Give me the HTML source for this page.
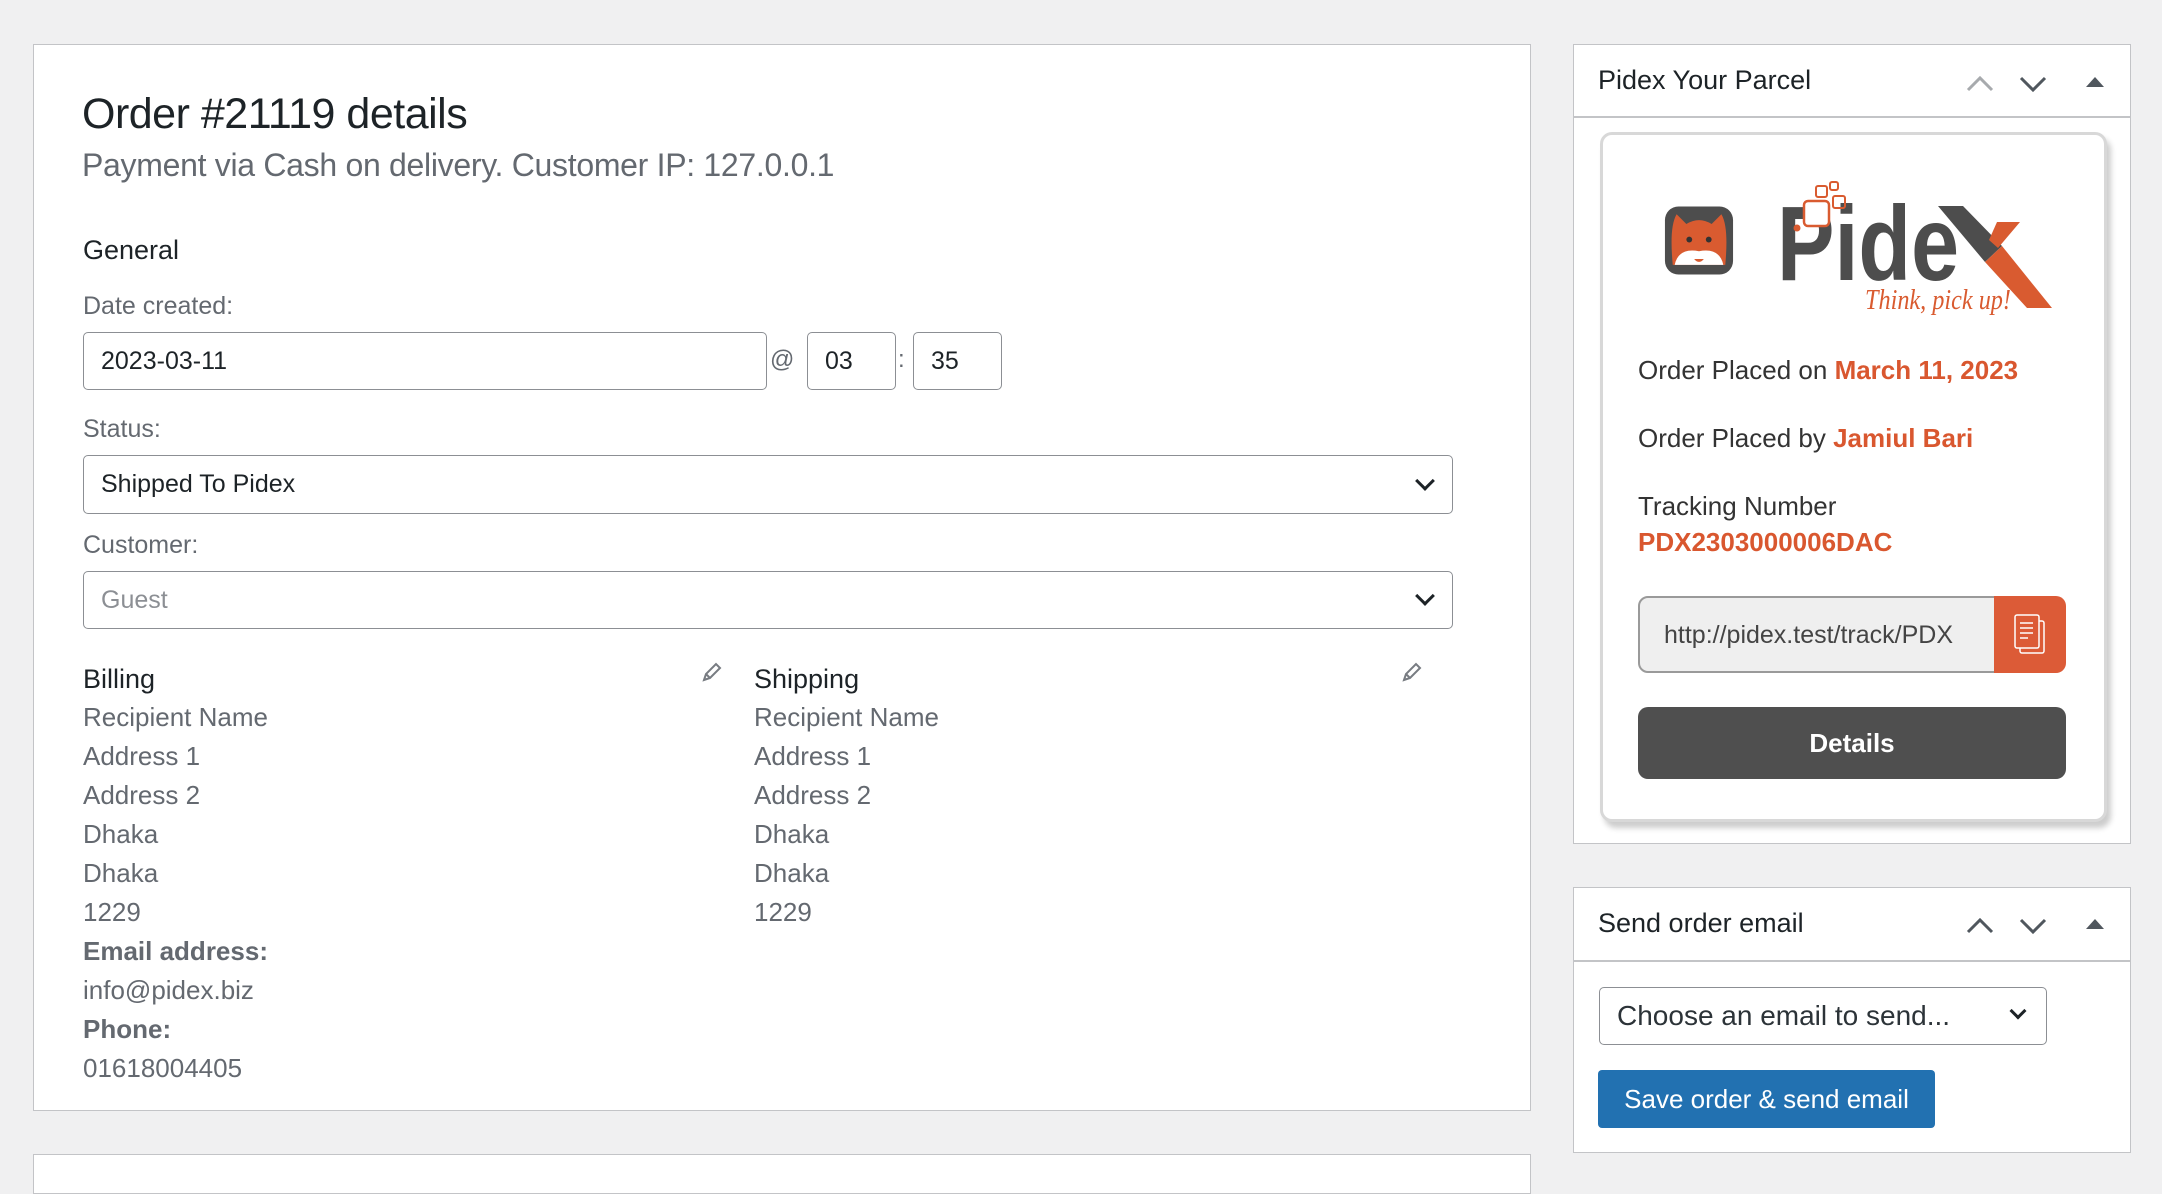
<!DOCTYPE html>
<html><head><meta charset="utf-8"><style>
*{box-sizing:border-box;margin:0;padding:0}
body{width:2162px;height:1178px;background:#f0f0f1;font-family:"Liberation Sans",sans-serif;color:#1d2327;position:relative;overflow:hidden}
.abs{position:absolute}
.panel{position:absolute;background:#fff;border:1.5px solid #c3c4c7}
.lbl{position:absolute;left:83px;font-size:25px;color:#646970}
.inp{position:absolute;border:1.5px solid #8c8f94;border-radius:5px;background:#fff;font-size:25px;padding-left:17px;display:flex;align-items:center}
.addr{position:absolute;font-size:26px;color:#646970;line-height:39px}
.chev{position:absolute;width:14px;height:14px;border-right:3px solid #1d2327;border-bottom:3px solid #1d2327;transform:rotate(45deg)}
.nun{font-family:"Liberation Sans",sans-serif}
</style></head><body>

<div class="panel" style="left:33px;top:44px;width:1498px;height:1067px"></div>
<div class="panel" style="left:33px;top:1154px;width:1498px;height:40px"></div>

<div class="abs" style="left:82px;top:90px;font-size:43px;letter-spacing:-0.5px">Order #21119 details</div>
<div class="abs" style="left:82px;top:147px;font-size:32px;color:#646970;letter-spacing:-0.3px">Payment via Cash on delivery. Customer IP: 127.0.0.1</div>
<div class="abs" style="left:83px;top:235px;font-size:27px">General</div>
<div class="lbl" style="top:292px">Date created:</div>
<div class="inp" style="left:83px;top:332px;width:684px;height:58px">2023-03-11</div>
<div class="abs" style="left:770px;top:346px;font-size:24px;color:#646970">@</div>
<div class="inp" style="left:807px;top:332px;width:89px;height:58px">03</div>
<div class="abs" style="left:898px;top:346px;font-size:24px;color:#646970">:</div>
<div class="inp" style="left:913px;top:332px;width:89px;height:58px">35</div>

<div class="lbl" style="top:415px">Status:</div>
<div class="inp" style="left:83px;top:455px;width:1370px;height:59px">Shipped To Pidex</div>
<div class="chev" style="left:1418px;top:474px"></div>
<div class="lbl" style="top:531px">Customer:</div>
<div class="inp" style="left:83px;top:571px;width:1370px;height:58px;color:#8c8f94">Guest</div>
<div class="chev" style="left:1418px;top:589px"></div>

<div class="abs" style="left:83px;top:664px;font-size:27px">Billing</div>
<div class="abs" style="left:754px;top:664px;font-size:27px">Shipping</div>
<svg class="abs" style="left:700px;top:660px" width="24" height="24" viewBox="0 0 24 24"><path d="M4 20l2-6 10-10 4 4-10 10z M6 14l4 4" fill="none" stroke="#787c82" stroke-width="2"/></svg>
<svg class="abs" style="left:1400px;top:660px" width="24" height="24" viewBox="0 0 24 24"><path d="M4 20l2-6 10-10 4 4-10 10z M6 14l4 4" fill="none" stroke="#787c82" stroke-width="2"/></svg>
<div class="addr" style="left:83px;top:698px">Recipient Name<br>Address 1<br>Address 2<br>Dhaka<br>Dhaka<br>1229<br><b>Email address:</b><br>info@pidex.biz<br><b>Phone:</b><br>01618004405</div>
<div class="addr" style="left:754px;top:698px">Recipient Name<br>Address 1<br>Address 2<br>Dhaka<br>Dhaka<br>1229</div>

<!-- right panel -->
<div class="panel" style="left:1573px;top:44px;width:558px;height:800px"></div>
<div class="abs" style="left:1574px;top:116px;width:556px;height:1.5px;background:#c3c4c7"></div>
<div class="abs" style="left:1598px;top:65px;font-size:27px">Pidex Your Parcel</div>
<svg class="abs" style="left:1964px;top:70px" width="160" height="26" viewBox="0 0 160 26"><path d="M4 20l12-12 12 12" fill="none" stroke="#a7aaad" stroke-width="3"/><path d="M57 8l12 12 12-12" fill="none" stroke="#50575e" stroke-width="3"/><path d="M122 17l9-10 9 10z" fill="#50575e"/></svg>

<div class="abs" style="left:1600px;top:132px;width:507px;height:690px;background:#fff;border:3px solid #d8d8d8;border-radius:12px;box-shadow:4px 6px 6px rgba(0,0,0,.2)"></div>
<!-- fox -->
<svg class="abs" style="left:1663px;top:203px" width="72" height="75" viewBox="0 0 74 74"><rect x="2" y="2" width="70" height="70" rx="14" fill="#4d4d4d"/><path d="M10 62 C8 40 8 20 14 10 L24 20 Q37 12 50 20 L60 10 C66 20 66 40 64 62Z" fill="#d95b30"/><path d="M12 62 Q16 44 37 48 Q58 44 62 62Z" fill="#fff"/><circle cx="27" cy="36" r="3" fill="#333"/><circle cx="47" cy="36" r="3" fill="#333"/><path d="M32 56 Q37 62 42 56" fill="#d95b30"/></svg>
<!-- Pidex wordmark -->
<svg class="abs" style="left:1770px;top:166px" width="300" height="160" viewBox="0 0 300 160">
<text x="7" y="114" font-family="Liberation Sans" font-weight="bold" font-size="106" fill="#4d4d4d" textLength="182" lengthAdjust="spacingAndGlyphs">Pide</text>
<path d="M168 40H193L232 80L215 96Z" fill="#4d4d4d"/>
<path d="M227 56H250L228 82L219 74Z" fill="#d95b30"/>
<path d="M215 96L232 80L282 142H257Z" fill="#d95b30"/>
<rect x="34" y="35" width="25" height="25" rx="4" fill="#fff" stroke="#d95b30" stroke-width="2.5"/>
<rect x="46" y="20" width="11" height="11" rx="2" fill="none" stroke="#d95b30" stroke-width="2"/>
<rect x="60" y="16" width="8" height="8" rx="2" fill="none" stroke="#d95b30" stroke-width="2"/>
<rect x="63" y="30" width="12" height="12" rx="2" fill="none" stroke="#d95b30" stroke-width="2"/>
<circle cx="27" cy="62" r="3.5" fill="#d95b30"/>
<text x="95" y="143" font-family="Liberation Serif" font-style="italic" font-size="28" fill="#d95b30" textLength="146" lengthAdjust="spacingAndGlyphs">Think, pick up!</text></svg>

<div class="abs nun" style="left:1638px;top:355px;font-size:26px;color:#333">Order Placed on <b style="color:#d9572f">March 11, 2023</b></div>
<div class="abs nun" style="left:1638px;top:423px;font-size:26px;color:#333">Order Placed by <b style="color:#d9572f">Jamiul Bari</b></div>
<div class="abs nun" style="left:1638px;top:491px;font-size:26px;color:#333">Tracking Number</div>
<div class="abs nun" style="left:1638px;top:527px;font-size:26px;color:#d9572f;font-weight:bold">PDX2303000006DAC</div>
<div class="abs nun" style="left:1638px;top:596px;width:360px;height:77px;background:#efefef;border:2px solid #9a9a9a;border-radius:10px 0 0 10px;font-size:25px;color:#444;padding:23px 0 0 24px;white-space:nowrap;overflow:hidden">http://pidex.test/track/PDX</div>
<div class="abs" style="left:1994px;top:596px;width:72px;height:77px;background:#dc5b37;border-radius:0 10px 10px 0"></div>
<svg class="abs" style="left:2012px;top:613px" width="36" height="44" viewBox="0 0 36 44"><rect x="8" y="8" width="24" height="32" rx="2" fill="none" stroke="#fff" stroke-width="1.5"/><rect x="3" y="2" width="24" height="33" rx="2" fill="#dc5b37" stroke="#fff" stroke-width="1.5"/><path d="M8 10h13M8 15h13M8 20h13M8 25h8" stroke="#fff" stroke-width="1.5"/></svg>
<div class="abs nun" style="left:1638px;top:707px;width:428px;height:72px;background:#4f4f4f;border-radius:10px;color:#fff;font-weight:bold;font-size:26px;text-align:center;line-height:72px">Details</div>

<!-- send order email -->
<div class="panel" style="left:1573px;top:887px;width:558px;height:266px"></div>
<div class="abs" style="left:1574px;top:960px;width:556px;height:1.5px;background:#c3c4c7"></div>
<div class="abs" style="left:1598px;top:908px;font-size:27px">Send order email</div>
<svg class="abs" style="left:1964px;top:912px" width="160" height="26" viewBox="0 0 160 26"><path d="M4 20l12-12 12 12" fill="none" stroke="#50575e" stroke-width="3"/><path d="M57 8l12 12 12-12" fill="none" stroke="#50575e" stroke-width="3"/><path d="M122 17l9-10 9 10z" fill="#50575e"/></svg>
<div class="inp" style="left:1599px;top:987px;width:448px;height:58px;color:#2c3338;font-size:28px">Choose an email to send...</div>
<div class="chev" style="left:2012px;top:1005px;width:12px;height:12px"></div>
<div class="abs" style="left:1598px;top:1070px;width:337px;height:58px;background:#2271b1;border-radius:4px;color:#fff;font-size:26px;text-align:center;line-height:58px">Save order &amp; send email</div>
</body></html>
